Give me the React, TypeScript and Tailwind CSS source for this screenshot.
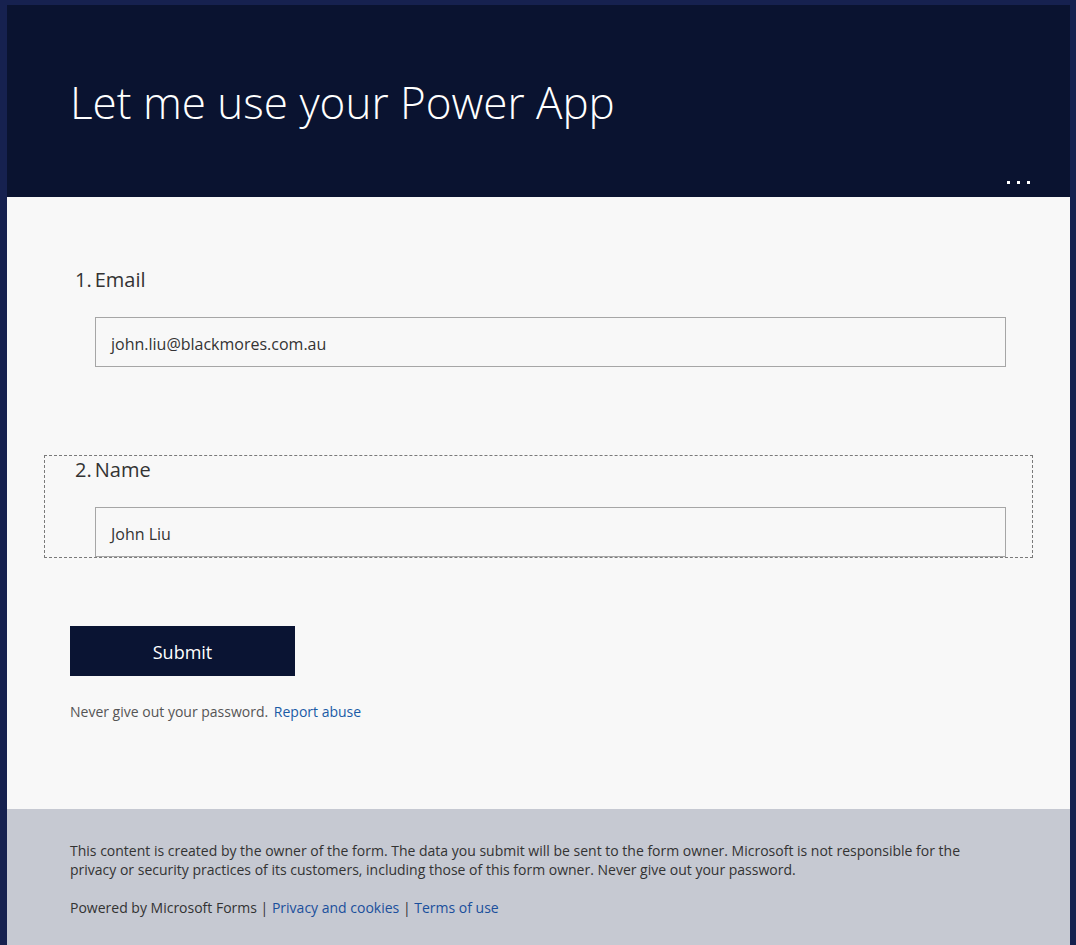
import React from "react";

const font = { fontFamily: '"Open Sans", "Noto Sans", sans-serif' };

const Question = ({
  num,
  label,
  value,
  focused,
}: {
  num: number;
  label: string;
  value: string;
  focused?: boolean;
}) => (
  <div
    className={`mx-[37px] border pb-0 pt-0 ${
      focused ? "border-dashed border-[#7a7a7a]" : "border-transparent"
    }`}
  >
    <div className="flex pl-[30px] text-[20px] leading-[28px] text-[#333333]">
      <span className="mr-[3px]">{num}.</span>
      <span>{label}</span>
    </div>
    <div className="mt-[23px] mr-[26px] ml-[50px] flex h-[50px] items-center border border-[#a6a6a6] bg-[#f8f8f8] px-[15px] pt-[3px] text-[16px] text-[#333333]">
      {value}
    </div>
  </div>
);

export default function App() {
  return (
    <div
      className="min-h-[945px] bg-[#16214f] pt-[5px] pr-[6px] pl-[7px]"
      style={font}
    >
      {/* HEADER */}
      <div className="flex h-[192px] flex-col bg-[#0a1330]">
        <h1 className="pt-[67px] pl-[63px] text-[44px] leading-[60px] font-light text-white">
          Let me use your Power App
        </h1>
        <div className="mt-auto flex justify-end gap-[7px] pr-[40px] pb-[13px]">
          <span className="h-[3px] w-[3px] bg-white" />
          <span className="h-[3px] w-[3px] bg-white" />
          <span className="h-[3px] w-[3px] bg-white" />
        </div>
      </div>

      {/* FORM BODY */}
      <div className="bg-[#f8f8f8] pt-[68px] pb-[87px]">
        <Question num={1} label="Email" value="john.liu@blackmores.com.au" />
        <div className="h-[87px]" />
        <Question num={2} label="Name" value="John Liu" focused />

        <div className="mt-[68px] pl-[63px]">
          <button className="h-[50px] w-[225px] bg-[#0a1433] pt-[2px] text-[18px] text-white">
            Submit
          </button>
          <p className="mt-[26px] text-[14px] leading-[20px] text-[#555555]">
            Never give out your password.{" "}
            <a className="ml-[2px] text-[#1a5ba6]">Report abuse</a>
          </p>
        </div>
      </div>

      {/* FOOTER */}
      <div className="min-h-[140px] bg-[#c6c9d2] px-[63px] pt-[32px] pb-[28px] text-[14px] leading-[19px] text-[#333333]">
        <p className="max-w-[930px]">
          This content is created by the owner of the form. The data you submit
          will be sent to the form owner. Microsoft is not responsible for the
          privacy or security practices of its customers, including those of
          this form owner. Never give out your password.
        </p>
        <p className="mt-[19px]">
          Powered by Microsoft Forms |{" "}
          <a className="text-[#1a4f9c]">Privacy and cookies</a> |{" "}
          <a className="text-[#1a4f9c]">Terms of use</a>
        </p>
      </div>
    </div>
  );
}
